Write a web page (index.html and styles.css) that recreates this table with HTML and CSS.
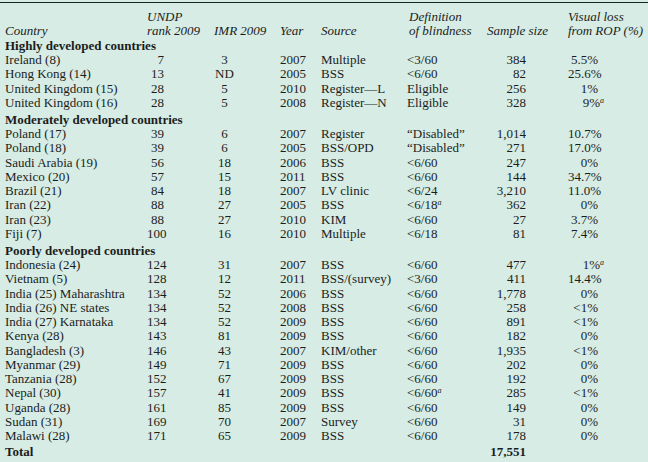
FILE: index.html
```html
<!DOCTYPE html>
<html>
<head>
<meta charset="utf-8">
<link rel="stylesheet" href="styles.css">
</head>
<body>
<div class="sheet">
<table class="rop">
<colgroup>
<col class="c-country"><col class="c-rank"><col class="c-imr"><col class="c-year"><col class="c-source"><col class="c-def"><col class="c-sample"><col class="c-loss">
</colgroup>
<thead>
<tr>
<th class="country">Country</th>
<th class="rank">UNDP<br>rank 2009</th>
<th class="imr">IMR 2009</th>
<th class="year">Year</th>
<th class="source">Source</th>
<th class="def">Definition<br>of blindness</th>
<th class="sample">Sample size</th>
<th class="loss">Visual loss<br>from ROP (%)</th>
</tr>
</thead>
<tbody>
<tr class="section first"><td colspan="8">Highly developed countries</td></tr>
<tr><td class="country">Ireland (8)</td><td class="rank">7</td><td class="imr">3</td><td class="year">2007</td><td class="source">Multiple</td><td class="def">&lt;3/60</td><td class="sample">384</td><td class="loss">5.5%</td></tr>
<tr><td class="country">Hong Kong (14)</td><td class="rank">13</td><td class="imr">ND</td><td class="year">2005</td><td class="source">BSS</td><td class="def">&lt;6/60</td><td class="sample">82</td><td class="loss">25.6%</td></tr>
<tr><td class="country">United Kingdom (15)</td><td class="rank">28</td><td class="imr">5</td><td class="year">2010</td><td class="source">Register—L</td><td class="def">Eligible</td><td class="sample">256</td><td class="loss">1%</td></tr>
<tr><td class="country">United Kingdom (16)</td><td class="rank">28</td><td class="imr">5</td><td class="year">2008</td><td class="source">Register—N</td><td class="def">Eligible</td><td class="sample">328</td><td class="loss">9%<sup>a</sup></td></tr>
<tr class="section"><td colspan="8">Moderately developed countries</td></tr>
<tr><td class="country">Poland (17)</td><td class="rank">39</td><td class="imr">6</td><td class="year">2007</td><td class="source">Register</td><td class="def">“Disabled”</td><td class="sample">1,014</td><td class="loss">10.7%</td></tr>
<tr><td class="country">Poland (18)</td><td class="rank">39</td><td class="imr">6</td><td class="year">2005</td><td class="source">BSS/OPD</td><td class="def">“Disabled”</td><td class="sample">271</td><td class="loss">17.0%</td></tr>
<tr><td class="country">Saudi Arabia (19)</td><td class="rank">56</td><td class="imr">18</td><td class="year">2006</td><td class="source">BSS</td><td class="def">&lt;6/60</td><td class="sample">247</td><td class="loss">0%</td></tr>
<tr><td class="country">Mexico (20)</td><td class="rank">57</td><td class="imr">15</td><td class="year">2011</td><td class="source">BSS</td><td class="def">&lt;6/60</td><td class="sample">144</td><td class="loss">34.7%</td></tr>
<tr><td class="country">Brazil (21)</td><td class="rank">84</td><td class="imr">18</td><td class="year">2007</td><td class="source">LV clinic</td><td class="def">&lt;6/24</td><td class="sample">3,210</td><td class="loss">11.0%</td></tr>
<tr><td class="country">Iran (22)</td><td class="rank">88</td><td class="imr">27</td><td class="year">2005</td><td class="source">BSS</td><td class="def">&lt;6/18<sup>a</sup></td><td class="sample">362</td><td class="loss">0%</td></tr>
<tr><td class="country">Iran (23)</td><td class="rank">88</td><td class="imr">27</td><td class="year">2010</td><td class="source">KIM</td><td class="def">&lt;6/60</td><td class="sample">27</td><td class="loss">3.7%</td></tr>
<tr><td class="country">Fiji (7)</td><td class="rank">100</td><td class="imr">16</td><td class="year">2010</td><td class="source">Multiple</td><td class="def">&lt;6/18</td><td class="sample">81</td><td class="loss">7.4%</td></tr>
<tr class="section"><td colspan="8">Poorly developed countries</td></tr>
<tr><td class="country">Indonesia (24)</td><td class="rank">124</td><td class="imr">31</td><td class="year">2007</td><td class="source">BSS</td><td class="def">&lt;6/60</td><td class="sample">477</td><td class="loss">1%<sup>a</sup></td></tr>
<tr><td class="country">Vietnam (5)</td><td class="rank">128</td><td class="imr">12</td><td class="year">2011</td><td class="source">BSS/(survey)</td><td class="def">&lt;3/60</td><td class="sample">411</td><td class="loss">14.4%</td></tr>
<tr><td class="country">India (25) Maharashtra</td><td class="rank">134</td><td class="imr">52</td><td class="year">2006</td><td class="source">BSS</td><td class="def">&lt;6/60</td><td class="sample">1,778</td><td class="loss">0%</td></tr>
<tr><td class="country">India (26) NE states</td><td class="rank">134</td><td class="imr">52</td><td class="year">2008</td><td class="source">BSS</td><td class="def">&lt;6/60</td><td class="sample">258</td><td class="loss">&lt;1%</td></tr>
<tr><td class="country">India (27) Karnataka</td><td class="rank">134</td><td class="imr">52</td><td class="year">2009</td><td class="source">BSS</td><td class="def">&lt;6/60</td><td class="sample">891</td><td class="loss">&lt;1%</td></tr>
<tr><td class="country">Kenya (28)</td><td class="rank">143</td><td class="imr">81</td><td class="year">2009</td><td class="source">BSS</td><td class="def">&lt;6/60</td><td class="sample">182</td><td class="loss">0%</td></tr>
<tr><td class="country">Bangladesh (3)</td><td class="rank">146</td><td class="imr">43</td><td class="year">2007</td><td class="source">KIM/other</td><td class="def">&lt;6/60</td><td class="sample">1,935</td><td class="loss">&lt;1%</td></tr>
<tr><td class="country">Myanmar (29)</td><td class="rank">149</td><td class="imr">71</td><td class="year">2009</td><td class="source">BSS</td><td class="def">&lt;6/60</td><td class="sample">202</td><td class="loss">0%</td></tr>
<tr><td class="country">Tanzania (28)</td><td class="rank">152</td><td class="imr">67</td><td class="year">2009</td><td class="source">BSS</td><td class="def">&lt;6/60</td><td class="sample">192</td><td class="loss">0%</td></tr>
<tr><td class="country">Nepal (30)</td><td class="rank">157</td><td class="imr">41</td><td class="year">2009</td><td class="source">BSS</td><td class="def">&lt;6/60<sup>a</sup></td><td class="sample">285</td><td class="loss">&lt;1%</td></tr>
<tr><td class="country">Uganda (28)</td><td class="rank">161</td><td class="imr">85</td><td class="year">2009</td><td class="source">BSS</td><td class="def">&lt;6/60</td><td class="sample">149</td><td class="loss">0%</td></tr>
<tr><td class="country">Sudan (31)</td><td class="rank">169</td><td class="imr">70</td><td class="year">2007</td><td class="source">Survey</td><td class="def">&lt;6/60</td><td class="sample">31</td><td class="loss">0%</td></tr>
<tr><td class="country">Malawi (28)</td><td class="rank">171</td><td class="imr">65</td><td class="year">2009</td><td class="source">BSS</td><td class="def">&lt;6/60</td><td class="sample">178</td><td class="loss">0%</td></tr>
<tr class="total"><td class="country">Total</td><td></td><td></td><td></td><td></td><td></td><td class="sample">17,551</td><td></td></tr>
</tbody>
</table>
</div>
</body>
</html>
```
FILE: styles.css
```css
html, body {
  margin: 0;
  padding: 0;
  background: #d7ece4;
}
body {
  font-family: "Liberation Serif", "Times New Roman", serif;
  color: #1b1d1c;
}
.sheet {
  padding-top: 2px;
  width: 648px;
}
.rop {
  width: 648px;
  border-collapse: collapse;
  table-layout: fixed;
  font-size: 13px;
  border-top: 1.5px solid #1a2722;
  border-bottom: 1.5px solid #1a2722;
}
.c-country { width: 147px; }
.c-rank { width: 64px; }
.c-imr { width: 67px; }
.c-year { width: 43px; }
.c-source { width: 86px; }
.c-def { width: 80px; }
.c-sample { width: 81px; }
.c-loss { width: 80px; }

.rop th {
  font-weight: normal;
  font-style: italic;
  text-align: left;
  vertical-align: bottom;
  line-height: 14px;
  padding: 7px 0 0 0;
  white-space: nowrap;
}
.rop td {
  line-height: 14.25px;
  padding: 0;
  white-space: nowrap;
}
.rop th.country, .rop td.country { padding-left: 5px; }
.rop th.imr { padding-left: 3px; }
.rop th.year { padding-left: 2px; }
.rop th.def { padding-left: 2px; }

.rop td.rank { text-align: right; padding-right: 47px; }
.rop td.imr { text-align: center; padding-left: 2px; padding-right: 42px; }
.rop td.year { padding-left: 2px; }
.rop td.sample { text-align: right; padding-right: 42px; }
.rop td.loss { text-align: right; padding-right: 50px; }

.rop sup {
  font-size: 8px;
  line-height: 0;
  font-style: italic;
  vertical-align: 4px;
}
.rop td.loss sup { margin-right: -6px; }

.rop tr.section td {
  font-weight: bold;
  padding: 3px 0 0 5px;
  line-height: 14px;
}
.rop tr.section.first td {
  padding-top: 1px;
}
.rop tr.total td {
  font-weight: bold;
  padding-top: 2px;
  padding-bottom: 4px;
}
```
